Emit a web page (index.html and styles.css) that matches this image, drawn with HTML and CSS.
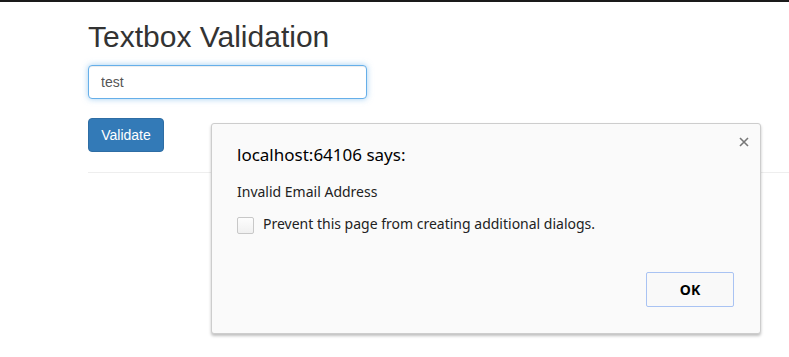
FILE: index.html
```html
<!DOCTYPE html>
<html lang="en">
<head>
  <meta charset="UTF-8" />
  <title>Textbox Validation</title>
  <link rel="stylesheet" href="styles.css">
</head>
<body>
  <div class="page">
    <h1>Textbox Validation</h1>
    <input class="field" type="text" value="test" />
    <button class="btn-validate">Validate</button>
    <hr class="rule" />
  </div>

  <div class="dialog">
    <span class="close">
      <svg width="10" height="10" viewBox="0 0 10 10">
        <path d="M1 1 L9 9 M9 1 L1 9" stroke="#777" stroke-width="1.6" fill="none"/>
      </svg>
    </span>
    <div class="dialog-title">localhost:64106 says:</div>
    <div class="dialog-msg">Invalid Email Address</div>
    <label class="dialog-check">
      <span class="box"></span>
      <span class="check-text">Prevent this page from creating additional dialogs.</span>
    </label>
    <div class="dialog-actions">
      <button class="btn-ok">OK</button>
    </div>
  </div>
</body>
</html>
```

FILE: styles.css
```css
* {
  margin: 0;
  padding: 0;
  box-sizing: border-box;
}

html, body {
  width: 100%;
  height: 100%;
  overflow: hidden;
  background: #fff;
}

body {
  border-top: 2px solid #1a1a1a;
  font-family: 'Liberation Sans', Arial, sans-serif;
  color: #333;
}

.page {
  padding: 0 0 0 88px;
  display: flex;
  flex-direction: column;
  align-items: flex-start;
}

.page h1 {
  font-size: 30px;
  font-weight: 400;
  line-height: 33px;
  margin-top: 18px;
  margin-bottom: 12px;
}

.field {
  width: 279px;
  height: 34px;
  padding: 6px 12px;
  font-family: inherit;
  font-size: 14px;
  color: #555;
  border: 1px solid #66afe9;
  border-radius: 4px;
  outline: none;
  box-shadow: inset 0 1px 1px rgba(0,0,0,.075), 0 0 6px rgba(102,175,233,.6);
}

.btn-validate {
  margin-top: 19px;
  width: 76px;
  height: 34px;
  font-family: inherit;
  font-size: 14px;
  color: #fff;
  background: #337ab7;
  border: 1px solid #2e6da4;
  border-radius: 4px;
}

.rule {
  margin-top: 20px;
  width: 720px;
  border: 0;
  border-top: 1px solid #eee;
}

.dialog {
  position: absolute;
  left: 211px;
  top: 123px;
  width: 550px;
  height: 211px;
  background: #fafafa;
  border: 1px solid #cdcdcd;
  border-radius: 3px;
  box-shadow: 0 2px 3px rgba(0,0,0,.25);
  padding: 0 26px 26px 25px;
  font-family: 'Noto Sans', 'Open Sans', sans-serif;
  color: #000;
  display: flex;
  flex-direction: column;
}

.close {
  position: absolute;
  top: 13px;
  right: 11px;
  line-height: 0;
}

.dialog-title {
  font-size: 17px;
  margin-top: 20px;
  line-height: 22px;
}

.dialog-msg {
  font-size: 14px;
  margin-top: 17px;
  line-height: 18px;
  color: #222;
}

.dialog-check {
  display: flex;
  align-items: flex-start;
  gap: 9px;
  margin-top: 16px;
  font-size: 14px;
  color: #222;
}

.check-text {
  line-height: 17px;
  margin-top: -2px;
}

.box {
  width: 17px;
  height: 17px;
  border: 1px solid #c8c8c8;
  border-radius: 2px;
  background: linear-gradient(#fdfdfd, #f0f0f0);
}

.dialog-actions {
  margin-top: auto;
  display: flex;
  justify-content: flex-end;
}

.btn-ok {
  width: 88px;
  height: 35px;
  font-family: inherit;
  font-size: 14px;
  font-weight: 700;
  color: #000;
  background: #f9f9f9;
  border: 1px solid #a9c3f3;
  border-radius: 2px;
}
```
